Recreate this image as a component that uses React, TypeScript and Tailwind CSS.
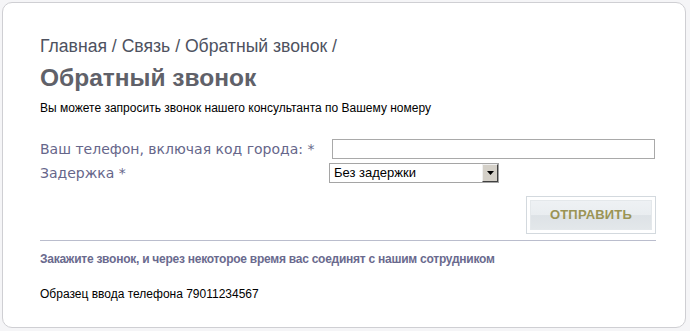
export default function App() {
  return (
    <div className="w-[690px] h-[331px] bg-[#f5f5f7] pl-[2px] pt-[2px]">
      <div className="w-[684px] h-[326px] bg-white border border-[#cfcfd3] rounded-[10px] pl-[37px] pr-[29px] pt-[33px]">
        {/* Breadcrumb */}
        <div className="font-['Liberation_Sans',sans-serif] text-[17.6px] leading-[20px] text-[#4e5260]">
          Главная / Связь / Обратный звонок /
        </div>
        <h1 className="mt-[8px] font-['Liberation_Sans',sans-serif] font-bold text-[24.5px] leading-[28px] text-[#606169]">
          Обратный звонок
        </h1>
        <p className="mt-[9px] font-['Liberation_Sans',sans-serif] text-[12px] leading-[14px] text-black">
          Вы можете запросить звонок нашего консультанта по Вашему номеру
        </p>

        {/* Form */}
        <div className="mt-[24px] grid grid-cols-[289px_1fr] gap-y-[4px] font-['DejaVu_Sans',sans-serif] text-[14px] text-[#66668a]">
          <label className="leading-[20px]">Ваш телефон, включая код города: *</label>
          <input
            type="text"
            className="ml-[3px] w-[323px] h-[20px] border border-[#a9a9a9] bg-white outline-none"
          />
          <label className="leading-[20px]">Задержка *</label>
          <div className="w-[170px] h-[20px] border border-[#a5a5a5] flex items-center justify-between bg-white">
            <span className="pl-[4px] font-['Liberation_Sans',sans-serif] text-[13px] text-black leading-[18px]">
              Без задержки
            </span>
            <div className="w-[16px] h-[18px] bg-[#d4d0c8] border-t border-l border-t-[#f0f0f0] border-l-[#f0f0f0] border-r border-b border-r-[#404040] border-b-[#404040] flex items-center justify-center">
              <svg width="7" height="4" viewBox="0 0 7 4">
                <path d="M0 0 H7 L3.5 4 Z" fill="#000" />
              </svg>
            </div>
          </div>
        </div>

        <div className="mt-[13px] flex justify-end">
          <button className="w-[130px] h-[38px] border border-[#d3d9de] p-[3px] bg-white">
            <div className="w-full h-full border border-[#e4e8eb] bg-[linear-gradient(#eef1f4_0%,#e9edf0_50%,#dde2e6_52%,#e3e7ea_100%)] flex items-center justify-center">
              <span className="font-['Liberation_Sans',sans-serif] font-bold text-[13px] text-[#9b9455] tracking-[0.2px]">
                ОТПРАВИТЬ
              </span>
            </div>
          </button>
        </div>

        <div className="mt-[6px] h-px bg-[#babdcd]" />

        <p className="mt-[11px] font-['Liberation_Sans',sans-serif] font-bold text-[12px] leading-[14px] tracking-[-0.25px] text-[#6a6a8e]">
          Закажите звонок, и через некоторое время вас соединят с нашим сотрудником
        </p>
        <p className="mt-[21px] font-['Liberation_Sans',sans-serif] text-[12px] leading-[14px] text-black">
          Образец ввода телефона 79011234567
        </p>
      </div>
    </div>
  );
}
